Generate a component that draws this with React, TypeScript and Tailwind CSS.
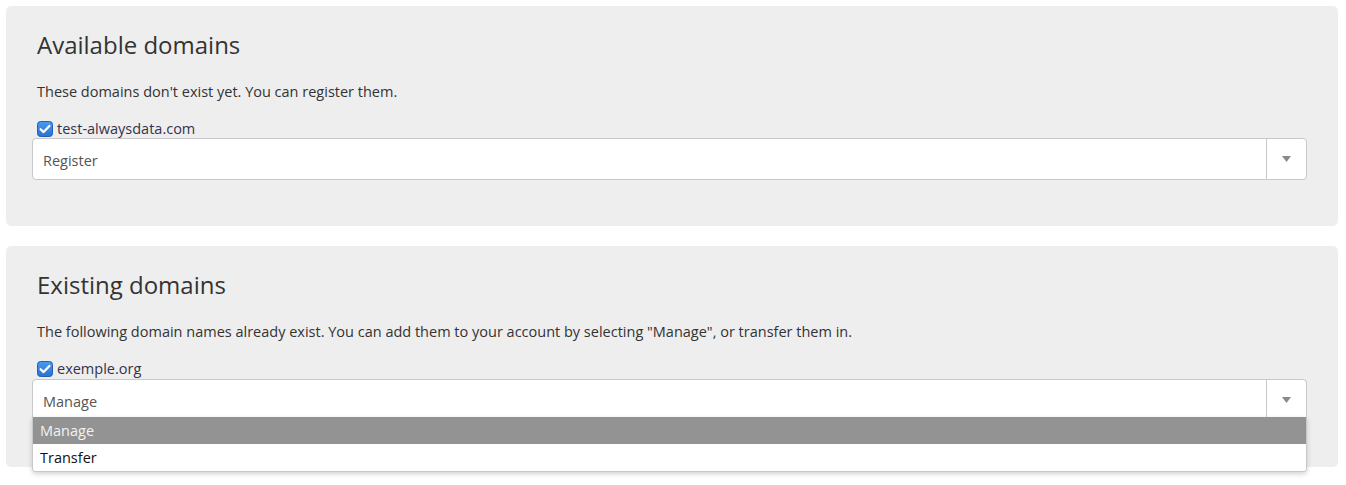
import React from "react";

function CheckBox() {
  return (
    <svg width="16" height="16" viewBox="0 0 16 16" className="shrink-0">
      <defs>
        <linearGradient id="cbg" x1="0" y1="0" x2="0" y2="1">
          <stop offset="0" stopColor="#4a9af0" />
          <stop offset="1" stopColor="#2a72d0" />
        </linearGradient>
      </defs>
      <rect x="0.5" y="0.5" width="15" height="15" rx="3" fill="url(#cbg)" stroke="#2160b5" />
      <path d="M3.6 8.2 L6.6 11.1 L12.4 4.9" fill="none" stroke="#fff" strokeWidth="2.2" strokeLinecap="round" strokeLinejoin="round" />
    </svg>
  );
}

function Arrow() {
  return (
    <div className="w-[40px] border-l border-[#c8c8c8] flex items-center justify-center">
      <svg width="9" height="6" viewBox="0 0 9 6">
        <path d="M0 0 H9 L4.5 6 Z" fill="#8a8a8a" />
      </svg>
    </div>
  );
}

function Panel({
  title,
  text,
  domain,
  value,
  open,
}: {
  title: string;
  text: string;
  domain: string;
  value: string;
  open?: boolean;
}) {
  return (
    <div className="bg-[#eeeeee] rounded-[5px] pt-[22px] pb-[46px] pl-[26px] pr-[31px]">
      <h2 className="pl-[5px] text-[24px] leading-[33px] text-[#333] font-normal">{title}</h2>
      <p className="pl-[5px] mt-[21px] text-[14.5px] leading-[20px] text-[#333]">{text}</p>
      <div className="pl-[5px] mt-[17px] h-[20px] flex items-center gap-[4px]">
        <CheckBox />
        <span className="text-[14.5px] leading-[20px] text-[#33334d]">{domain}</span>
      </div>
      <div className={open ? "relative mt-0" : "relative -mt-[1px]"}>
        <div className="h-[42px] bg-white border border-[#c8c8c8] rounded-[4px] flex">
          <div className="flex-1 flex items-center pl-[10px] pt-[3px] text-[14.5px] text-[#555]">{value}</div>
          <Arrow />
        </div>
        {open && (
          <div className="absolute left-0 right-0 top-[38px] z-10 bg-white border border-t-0 border-[#c8c8c8] rounded-b-[4px] shadow-[0_2px_5px_rgba(0,0,0,0.18)] overflow-hidden">
            <div className="h-[27px] bg-[#939393] text-[#f2f2f2] text-[14.5px] flex items-center pl-[7px] pt-[1px]">Manage</div>
            <div className="h-[27px] bg-white text-[#111] text-[14.5px] flex items-center pl-[7px] pt-[1px]">Transfer</div>
          </div>
        )}
      </div>
    </div>
  );
}

export default function App() {
  return (
    <div
      className="w-[1346px] h-[485px] bg-white pt-[6px] pl-[6px]"
      style={{ fontFamily: '"Open Sans", "Noto Sans", sans-serif' }}
    >
      <div className="w-[1332px] flex flex-col gap-[20px]">
        <Panel
          title="Available domains"
          text="These domains don't exist yet. You can register them."
          domain="test-alwaysdata.com"
          value="Register"
        />
        <Panel
          title="Existing domains"
          text={'The following domain names already exist. You can add them to your account by selecting "Manage", or transfer them in.'}
          domain="exemple.org"
          value="Manage"
          open
        />
      </div>
    </div>
  );
}
